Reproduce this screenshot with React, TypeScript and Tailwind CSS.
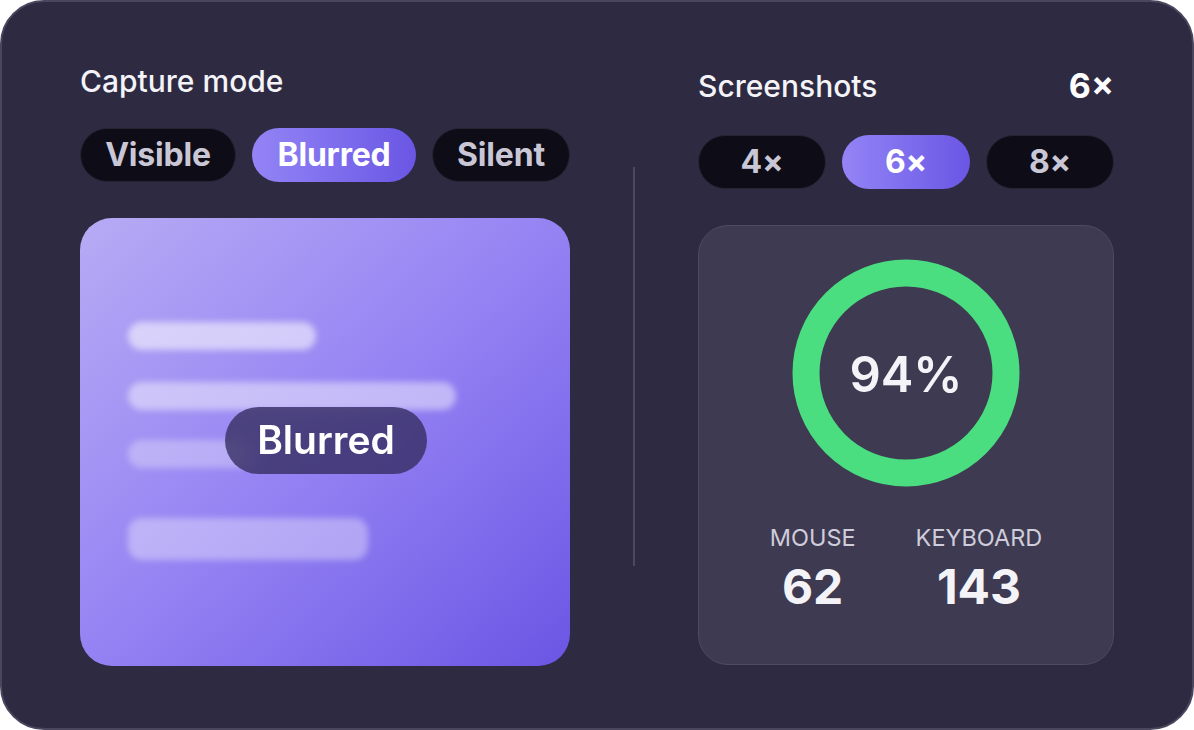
import { useState } from 'react';

const modes = ['Visible', 'Blurred', 'Silent'];
const counts = ['4×', '6×', '8×'];

function Pill({ label, active, onClick, className = '' }: { label: string; active: boolean; onClick: () => void; className?: string }) {
  return (
    <button
      type="button"
      onClick={onClick}
      className={`h-[54px] rounded-full text-[32px] font-bold leading-none tracking-[-0.2px] ${
        active
          ? 'bg-gradient-to-r from-[#9484f6] to-[#6a56e4] text-white'
          : 'border border-[#262433] bg-[#0e0c17] text-[#c9c7d6]'
      } ${className}`}
    >
      {label}
    </button>
  );
}

export default function App() {
  const [mode, setMode] = useState('Blurred');
  const [count, setCount] = useState('6×');

  return (
    <div className="h-[730px] w-[1194px] bg-white font-['Inter',sans-serif]">
      <div className="flex h-full w-full rounded-[44px] border-2 border-[#4a465e] bg-[#2d2a42] px-[78px] pt-[61px] pb-[62px]">
        {/* left column */}
        <div className="flex w-[490px] flex-col">
          <h2 className="text-[30px] leading-[36px] font-medium text-[#f4f3f8]">Capture mode</h2>
          <div className="mt-[29px] flex gap-4">
            {modes.map((m) => (
              <Pill
                key={m}
                label={m}
                active={mode === m}
                onClick={() => setMode(m)}
                className={m === 'Visible' ? 'w-[156px]' : m === 'Blurred' ? 'w-[164px]' : 'w-[138px]'}
              />
            ))}
          </div>
          <div className="relative mt-[36px] h-[448px] overflow-hidden rounded-[32px] bg-gradient-to-br from-[#b7abf4] via-[#9582f3] to-[#6b55e4]">
            <div className="flex flex-col pt-[104px] pl-[48px]">
              <div className="h-[28px] w-[188px] rounded-full bg-white/55 blur-[3px]" />
              <div className="mt-[32px] h-[28px] w-[328px] rounded-full bg-white/45 blur-[3px]" />
              <div className="mt-[30px] h-[28px] w-[124px] rounded-full bg-white/30 blur-[3px]" />
              <div className="mt-[50px] h-[42px] w-[240px] rounded-[14px] bg-white/35 blur-[3px]" />
            </div>
            <div className="absolute top-[189px] left-[145px] flex h-[67px] w-[202px] items-center justify-center rounded-full bg-[#2f2858]/75 backdrop-blur-sm">
              <span className="text-[39px] font-semibold text-white">Blurred</span>
            </div>
          </div>
        </div>

        {/* divider */}
        <div className="mx-[63px] mt-[104px] mb-[100px] w-[2px] bg-[#4b4862]" />

        {/* right column */}
        <div className="flex w-[416px] flex-col">
          <div className="flex items-center justify-between pt-[5px]">
            <h2 className="text-[30px] leading-[36px] font-medium text-[#f4f3f8]">Screenshots</h2>
            <span className="text-[34px] leading-[36px] font-bold text-white">6×</span>
          </div>
          <div className="mt-[31px] flex gap-4">
            {counts.map((c) => (
              <Pill key={c} label={c} active={count === c} onClick={() => setCount(c)} className="w-[128px] text-[30px]" />
            ))}
          </div>
          <div className="mt-[36px] flex h-[440px] flex-col items-center rounded-[30px] border border-[#4d4a63] bg-[#3d3a51] pt-[33px]">
            <div className="relative flex h-[228px] w-[228px] items-center justify-center">
              <svg width="228" height="228" viewBox="0 0 228 228" className="absolute inset-0">
                <circle cx="114" cy="114" r="100" fill="none" stroke="#4ade80" strokeWidth="27" />
              </svg>
              <span className="mt-[4px] text-[49px] font-semibold text-[#f4f3f8]">94%</span>
            </div>
            <div className="mt-[36px] flex gap-[60px]">
              <div className="flex flex-col items-center">
                <span className="text-[23.5px] leading-[30px] text-[#cfccdb]">MOUSE</span>
                <span className="mt-[6px] text-[48px] leading-[56px] font-bold text-[#f4f3f8]">62</span>
              </div>
              <div className="flex flex-col items-center">
                <span className="text-[23.5px] leading-[30px] text-[#cfccdb]">KEYBOARD</span>
                <span className="mt-[6px] text-[48px] leading-[56px] font-bold text-[#f4f3f8]">143</span>
              </div>
            </div>
          </div>
        </div>
      </div>
    </div>
  );
}
